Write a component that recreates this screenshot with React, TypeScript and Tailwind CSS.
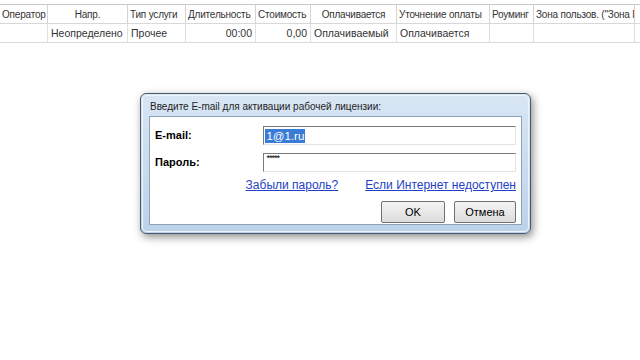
import React from "react";

const cols = [
  { w: 48, h: "Оператор", d: "", hAlign: "text-right", dAlign: "text-left" },
  { w: 80, h: "Напр.", d: "Неопределено", hAlign: "text-center", dAlign: "text-left" },
  { w: 58, h: "Тип услуги", d: "Прочее", hAlign: "text-left", dAlign: "text-left" },
  { w: 70, h: "Длительность", d: "00:00", hAlign: "text-left", dAlign: "text-right" },
  { w: 55, h: "Стоимость", d: "0,00", hAlign: "text-left", dAlign: "text-right" },
  { w: 86, h: "Оплачивается", d: "Оплачиваемый", hAlign: "text-center", dAlign: "text-left" },
  { w: 93, h: "Уточнение оплаты", d: "Оплачивается", hAlign: "text-left", dAlign: "text-left" },
  { w: 44, h: "Роуминг", d: "", hAlign: "text-left", dAlign: "text-left" },
  { w: 101, h: "Зона пользов. (\"Зона П", d: "", hAlign: "text-left", dAlign: "text-left" },
  { w: 20, h: "", d: "", hAlign: "text-left", dAlign: "text-left" },
];

const btn =
  "h-[22px] border border-[#707070] rounded-[2px] bg-gradient-to-b from-[#f4f4f4] to-[#dcdcdc] flex items-center justify-center text-[11px] text-black";
const input =
  "w-[254px] h-[19px] border border-[#7a7a7a] border-b-[#e3e3e3] border-r-[#e3e3e3] bg-white flex px-[1px]";

export default function App() {
  return (
    <div
      className="w-[640px] h-[360px] bg-white overflow-hidden relative"
      style={{ fontFamily: "'Liberation Sans', Arial, sans-serif" }}
    >
      <div className="pt-[4px]">
        <div className="flex border-t border-[#c8c8c8] border-b border-b-[#d8d8d8] h-[20px] whitespace-nowrap">
          {cols.map((c, i) => (
            <div
              key={i}
              style={{ width: c.w }}
              className={`shrink-0 overflow-hidden border-r border-[#d4d4d4] px-[2px] text-[10px] tracking-[-0.2px] leading-[19px] text-[#333] ${c.hAlign}`}
            >
              {c.h}
            </div>
          ))}
        </div>
        <div className="flex border-b border-[#d8d8d8] h-[19px] whitespace-nowrap">
          {cols.map((c, i) => (
            <div
              key={i}
              style={{ width: c.w }}
              className={`shrink-0 overflow-hidden border-r border-[#e0e0e0] px-[3px] text-[10.5px] leading-[18px] text-[#333] ${c.dAlign}`}
            >
              {c.d}
            </div>
          ))}
        </div>
      </div>

      {/* Dialog window */}
      <div className="absolute left-[140px] top-[93px] w-[391px] h-[141px] rounded-[6px] border border-[#4a5a6a] shadow-[2px_3px_8px_rgba(0,0,0,0.45)] bg-gradient-to-b from-[#d8e6f4] to-[#bcd2ea] p-[1px]">
        <div className="h-full w-full rounded-[5px] border border-[#eef4fb] flex flex-col px-[6px]">
          <div className="h-[20px] flex items-center text-[10px] text-[#1e1e1e] pl-[1px]">
            Введите E-mail для активации рабочей лицензии:
          </div>
          <div className="flex-1 mb-[6px] bg-white border border-[#8ea2b8] flex flex-col pl-[5px] pr-[5px] pt-[9px]">
            <div className="flex items-center">
              <div className="w-[109px] text-[11px] font-bold text-black">E-mail:</div>
              <div className={`${input} items-center`}>
                <span className="bg-[#3a7bd5] text-white text-[11.5px] leading-[14px] px-[1px]">1@1.ru</span>
              </div>
            </div>
            <div className="flex items-center mt-[8px]">
              <div className="w-[109px] text-[11px] font-bold text-black">Пароль:</div>
              <div className={`${input} items-start pl-[2px]`}>
                <span className="text-[9px] leading-[9px] text-black tracking-[-1px]">*****</span>
              </div>
            </div>
            <div className="flex justify-end gap-[27px] mt-[6px] text-[12px] text-[#1f3fc6] underline leading-[14px]">
              <span>Забыли пароль?</span>
              <span>Если Интернет недоступен</span>
            </div>
            <div className="flex justify-end gap-[9px] mt-[9px]">
              <div className={`${btn} w-[64px]`}>OK</div>
              <div className={`${btn} w-[62px]`}>Отмена</div>
            </div>
          </div>
        </div>
      </div>
    </div>
  );
}
